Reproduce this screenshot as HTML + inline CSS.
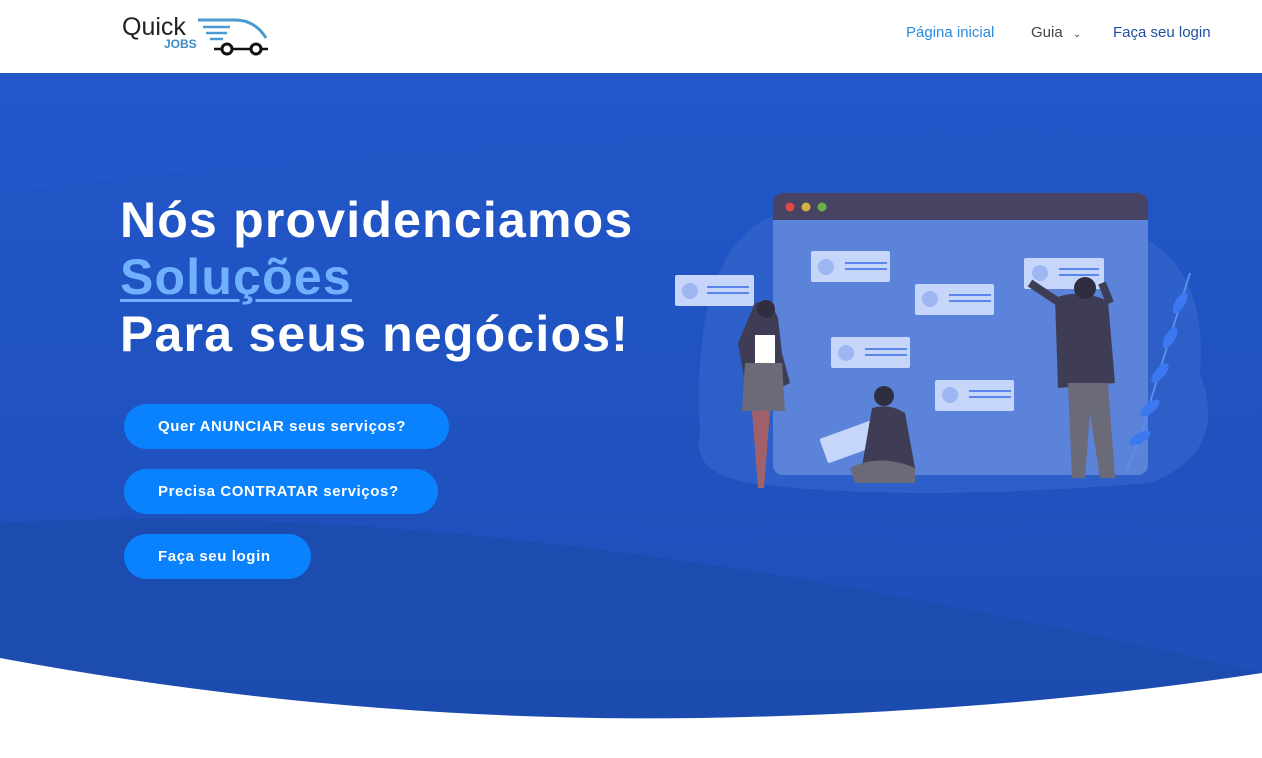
<!DOCTYPE html>
<html><head><meta charset="utf-8"><style>
*{margin:0;padding:0;box-sizing:border-box}
body{width:1262px;height:758px;overflow:hidden;background:#fff;font-family:"Liberation Sans",sans-serif;position:relative}
header{position:absolute;top:0;left:0;width:1262px;height:73px;background:#fff}
.nav{position:absolute;top:24px;font-size:15px}
.hero{position:absolute;top:73px;left:0;width:1262px;height:660px;overflow:hidden}
h1{position:absolute;left:120px;top:192px;color:#fff;font-size:50px;font-weight:bold;line-height:57px;letter-spacing:1.2px}
h1 u{color:#6fb1ff;text-decoration-thickness:3px;text-underline-offset:5px}
.btn{position:absolute;left:124px;height:45px;border-radius:23px;background:#0a82fd;color:#fff;font-weight:bold;font-size:15px;letter-spacing:.6px;line-height:45px;padding-left:34px}
</style></head><body>
<header>
<svg width="170" height="60" style="position:absolute;left:110px;top:5px" viewBox="0 0 170 60">
<text x="12" y="30" font-family="Liberation Sans" font-size="25" fill="#222">Quick</text>
<text x="54" y="43" font-family="Liberation Sans" font-size="12" font-weight="bold" fill="#3b8cc4">JOBS</text>
<path d="M88 15 H125 Q145 15 156 33" stroke="#4a9ad0" stroke-width="3" fill="none"/>
<path d="M93 22 H120 M96 28 H117 M100 34 H113" stroke="#4a9ad0" stroke-width="2.5"/>
<circle cx="117" cy="44" r="5" stroke="#111" stroke-width="3" fill="none"/>
<circle cx="146" cy="44" r="5" stroke="#111" stroke-width="3" fill="none"/>
<path d="M104 44 h7 M123 44 h17 M152 44 h6" stroke="#111" stroke-width="2.5"/>
</svg>
<div class="nav" style="left:906px;color:#2a8be0">Página inicial</div>
<div class="nav" style="left:1031px;color:#444">Guia <span style="font-size:10px;margin-left:6px">⌄</span></div>
<div class="nav" style="left:1113px;color:#1f4fa0">Faça seu login</div>
</header>
<div class="hero">
<svg width="1262" height="660" style="position:absolute;left:0;top:0">
<defs><linearGradient id="g" x1="0" y1="0" x2="0" y2="1"><stop offset="0" stop-color="#2256c8"/><stop offset="1" stop-color="#1d4fb8"/></linearGradient></defs>
<rect width="1262" height="660" fill="url(#g)"/>
<path d="M0 120 Q600 40 1262 60 V0 H0Z" fill="#2459ca" opacity=".7"/>
<path d="M0 450 Q500 420 1262 600 V660 H0Z" fill="#1c4aa8" opacity=".6"/>
<path d="M700 360 Q690 170 780 140 Q950 110 1100 150 Q1210 170 1200 300 Q1230 380 1150 410 Q900 430 750 410 Q690 400 700 360Z" fill="#3a6ad0" opacity=".55"/>
<path d="M0 585 Q350 650 700 645 Q1000 640 1262 600 V660 H0Z" fill="#fff"/>
<rect x="773" y="120" width="375" height="282" rx="10" fill="#5b83d9"/>
<path d="M783 120 H1138 a10 10 0 0 1 10 10 V147 H773 V130 a10 10 0 0 1 10 -10Z" fill="#464462"/>
<circle cx="790" cy="134" r="4.5" fill="#e04848"/><circle cx="806" cy="134" r="4.5" fill="#d4b13a"/><circle cx="822" cy="134" r="4.5" fill="#6ab04c"/>
<g fill="#c6d6fb">
<rect x="675" y="202" width="79" height="31" rx="2"/><rect x="811" y="178" width="79" height="31" rx="2"/>
<rect x="915" y="211" width="79" height="31" rx="2"/><rect x="1024" y="185" width="80" height="31" rx="2"/>
<rect x="831" y="264" width="79" height="31" rx="2"/><rect x="935" y="307" width="79" height="31" rx="2"/>
<rect x="822" y="355" width="60" height="26" rx="2" transform="rotate(-20 852 368)"/>
</g>
<g fill="#9eb7f2"><circle cx="690" cy="218" r="8"/><circle cx="826" cy="194" r="8"/><circle cx="930" cy="226" r="8"/><circle cx="1040" cy="200" r="8"/><circle cx="846" cy="280" r="8"/><circle cx="950" cy="322" r="8"/></g>
<g stroke="#5c86ee" stroke-width="2"><path d="M707 214h42M707 220h42M845 190h42M845 196h42M949 222h42M949 228h42M1059 196h40M1059 202h40M865 276h42M865 282h42M969 318h42M969 324h42"/></g>
<path d="M1190 200 Q1165 280 1150 330 Q1140 370 1125 400" stroke="#5a8ee8" stroke-width="2" fill="none"/>
<g fill="#3c78f0"><ellipse cx="1180" cy="230" rx="5" ry="12" transform="rotate(30 1180 230)"/><ellipse cx="1170" cy="265" rx="5" ry="12" transform="rotate(30 1170 265)"/><ellipse cx="1160" cy="300" rx="5" ry="12" transform="rotate(40 1160 300)"/><ellipse cx="1150" cy="335" rx="5" ry="12" transform="rotate(50 1150 335)"/><ellipse cx="1140" cy="365" rx="5" ry="12" transform="rotate(60 1140 365)"/></g>
<path d="M755 230 Q770 225 778 245 L782 280 L790 310 L780 315 L760 320 L745 310 L738 270Z" fill="#3f3d56"/>
<rect x="755" y="262" width="20" height="28" fill="#fff"/>
<path d="M745 290 H782 L785 338 H742Z" fill="#6b6a78"/>
<path d="M752 338 L758 415 H764 L770 338Z" fill="#a0616a"/>
<circle cx="766" cy="236" r="9" fill="#2f2e41"/>
<path d="M1055 225 Q1080 215 1108 228 L1115 310 L1058 315Z" fill="#3f3d56"/>
<path d="M1068 310 H1108 L1115 405 H1100 L1090 340 L1085 405 H1072Z" fill="#6b6a78"/>
<circle cx="1085" cy="215" r="11" fill="#2f2e41"/>
<path d="M1060 230 L1030 210 M1110 230 L1102 210" stroke="#3f3d56" stroke-width="8"/>
<path d="M872 335 Q890 330 905 340 L915 395 L860 405Z" fill="#3f3d56"/>
<path d="M850 395 Q880 380 915 395 L915 410 H855Z" fill="#6b6a78"/>
<circle cx="884" cy="323" r="10" fill="#2f2e41"/>
</svg>
<h1 style="top:119px">Nós providenciamos<br><u>Soluções</u><br>Para seus negócios!</h1>
<div class="btn" style="top:331px;width:325px">Quer ANUNCIAR seus serviços?</div>
<div class="btn" style="top:396px;width:314px">Precisa CONTRATAR serviços?</div>
<div class="btn" style="top:461px;width:187px">Faça seu login</div>
</div>
</body></html>
